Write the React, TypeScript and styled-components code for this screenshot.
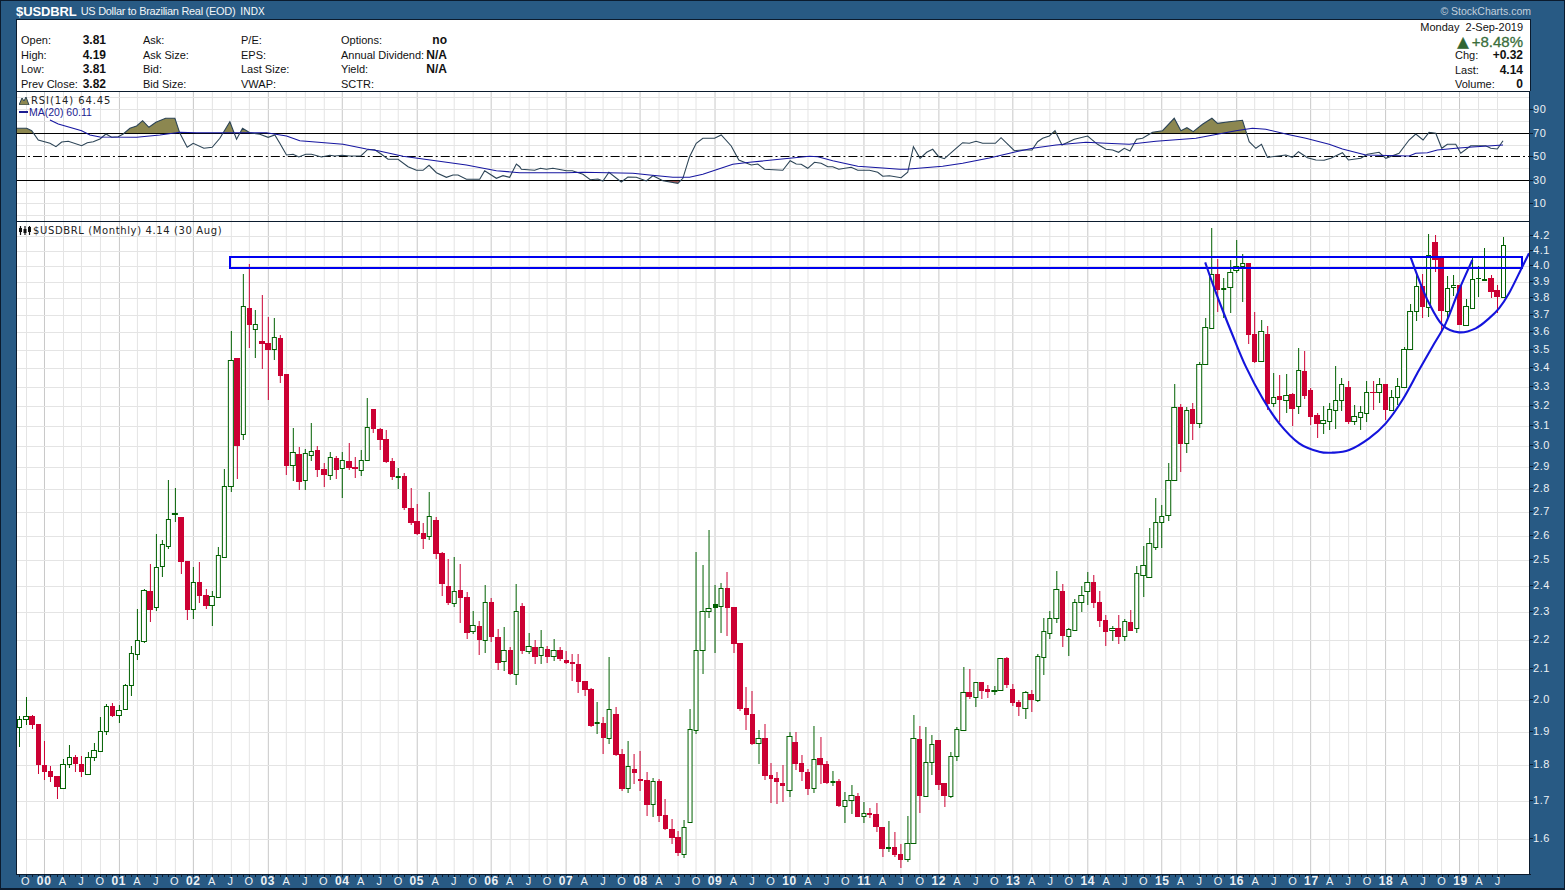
import styled, { createGlobalStyle } from 'styled-components';

// page coordinates of each monthly bar: [wick top, wick bottom, body top, body bottom, up]
type Bar = [number, number, number, number, number];

const bars: Bar[] = [
  [716,747,719,727,1],[697,725,716,719,1],[715,729,716,725,0],[724,774,724,765,0],[741,780,765,772,0],
  [766,782,771,777,0],[776,799,776,787,0],[759,788,764,788,1],[745,768,757,764,1],[755,772,757,764,0],
  [756,777,764,772,0],[752,774,757,774,1],[743,761,750,757,1],[717,751,731,751,1],[704,735,706,731,1],
  [703,717,706,716,0],[705,723,710,715,1],[684,709,685,709,1],[646,696,653,685,1],[609,660,640,654,1],
  [589,643,590,641,1],[564,622,591,610,0],[534,611,567,607,1],[540,577,544,566,1],[480,549,519,546,1],
  [488,522,513,514,1],[517,574,517,562,0],[561,620,561,610,0],[567,619,582,609,1],[562,603,582,596,0],
  [589,609,595,606,0],[591,626,596,605,1],[547,597,555,597,1],[469,557,486,557,1],[331,492,360,486,1],
  [358,479,358,446,0],[274,440,306,434,1],[264,348,308,325,0],[310,358,324,329,1],[295,369,341,344,0],
  [317,400,343,350,0],[318,360,337,349,1],[335,383,338,376,0],[374,475,374,466,0],[428,481,452,465,1],
  [447,490,454,482,0],[449,490,453,480,1],[423,461,451,455,1],[446,477,450,470,0],[463,487,469,475,0],
  [452,480,457,475,1],[456,479,458,470,0],[452,498,460,468,1],[443,470,461,468,0],[457,478,467,469,0],
  [450,476,460,470,1],[398,460,427,460,1],[409,433,409,429,0],[428,450,429,440,0],[430,463,439,462,0],
  [458,480,461,477,0],[468,489,476,477,1],[473,510,476,508,0],[488,525,508,523,0],[504,535,521,534,0],
  [523,549,533,539,0],[492,540,516,536,1],[517,559,520,554,0],[552,596,553,584,0],[559,605,586,603,0],
  [557,607,591,603,1],[564,623,590,598,0],[592,639,597,633,0],[611,634,625,631,1],[621,655,626,640,0],
  [585,653,602,640,1],[598,642,602,637,0],[629,670,637,663,0],[627,671,650,661,1],[647,675,650,674,0],
  [584,685,611,674,1],[603,654,606,651,0],[633,654,646,651,1],[640,664,647,657,0],[630,664,647,655,1],
  [646,663,649,657,0],[639,661,650,656,1],[647,661,650,659,0],[651,664,660,663,0],[654,681,662,664,0],
  [654,693,664,682,0],[681,696,681,690,0],[688,727,689,726,0],[702,734,722,723,1],[717,754,723,738,0],
  [657,744,709,738,1],[707,756,714,755,0],[749,791,754,789,0],[741,793,766,788,1],[754,784,769,773,0],
  [751,791,779,781,0],[772,816,780,805,0],[778,817,781,804,1],[779,822,781,816,0],[799,830,815,829,0],
  [819,844,829,838,0],[831,856,837,853,0],[820,858,827,854,1],[709,822,729,822,1],[552,734,650,730,1],
  [565,674,611,650,1],[530,618,608,611,1],[585,653,604,608,2],[583,633,588,606,1],[572,636,588,608,0],
  [607,653,607,644,0],[643,711,643,709,0],[687,730,708,715,0],[691,745,714,744,0],[730,764,738,743,1],
  [724,780,738,776,0],[763,803,775,779,0],[772,804,778,782,0],[765,802,783,786,0],[732,797,736,790,1],
  [732,770,742,764,0],[755,781,763,772,0],[769,795,772,789,0],[726,793,759,788,1],[737,784,758,765,0],
  [761,784,764,783,0],[771,786,781,782,1],[779,807,781,806,0],[792,823,800,806,1],[785,814,795,800,1],
  [793,817,796,817,0],[802,823,813,816,1],[808,818,813,815,0],[803,832,814,827,0],[827,857,827,849,0],
  [821,852,847,849,2],[832,857,847,855,0],[844,868,854,860,0],[816,862,843,859,1],[715,843,738,843,1],
  [726,813,739,796,0],[727,797,762,796,1],[735,775,744,762,1],[740,790,740,785,0],[783,807,783,796,0],
  [752,798,756,796,1],[727,761,729,756,1],[667,730,692,730,1],[669,699,692,697,0],[682,707,682,697,1],
  [682,699,682,691,0],[685,698,689,692,0],[686,695,690,691,1],[658,690,658,690,1],[657,688,658,685,0],
  [684,706,689,703,0],[700,716,702,707,0],[691,719,692,708,1],[690,712,694,700,0],[654,702,656,700,1],
  [618,675,631,657,1],[611,639,618,633,1],[571,623,589,618,1],[584,647,591,636,0],[628,656,629,636,1],
  [599,630,602,630,1],[586,612,595,602,1],[572,605,582,591,1],[575,608,582,603,0],[591,627,602,621,0],
  [615,646,620,632,0],[626,641,628,630,1],[615,644,628,637,0],[619,641,621,636,1],[610,631,622,631,0],
  [566,633,573,628,1],[546,597,565,575,1],[528,577,543,577,1],[498,550,522,547,1],[505,548,516,522,1],
  [463,521,480,515,1],[384,480,407,480,1],[404,472,407,444,0],[407,453,410,443,1],[403,440,409,424,0],
  [362,428,364,423,1],[318,365,327,364,1],[228,328,274,328,1],[259,312,274,290,0],[278,318,288,289,1],
  [260,313,272,287,1],[240,273,266,270,1],[254,302,263,266,1],[263,344,263,335,0],[312,363,334,362,0],
  [320,361,331,361,1],[326,410,334,404,0],[373,407,397,403,1],[375,422,396,400,0],[374,413,395,400,1],
  [393,426,394,409,0],[348,414,370,406,1],[351,399,371,396,0],[388,425,390,417,0],[413,438,415,424,0],
  [406,434,420,423,1],[403,430,409,421,1],[366,429,400,410,1],[378,411,384,400,1],[381,424,387,422,0],
  [405,425,416,421,1],[406,430,412,417,1],[381,422,392,413,1],[381,410,392,393,0],[378,403,384,392,1],
  [384,420,384,410,0],[390,410,397,410,1],[378,405,386,397,1],[347,387,349,387,1],[304,349,311,349,1],
  [274,321,286,311,1],[274,318,286,307,0],[234,317,255,307,1],[235,272,242,260,0],[258,333,258,311,0],
  [276,321,288,311,1],[275,296,285,287,1],[285,325,285,325,0],[299,326,306,325,1],[257,308,279,308,1],
  [266,297,278,279,2],[248,280,279,280,1],[275,298,278,292,0],[285,313,290,297,0],[237,298,245,297,1],
];

const barX = (i: number) => 19.3 + i * 6.212;
const priceY = (p: number) => 839 - 625 * Math.log(p / 1.6);

const scaled = (x0: number, y0: number, pts: number[]) => {
  const out: [number, number][] = [];
  for (let i = 0; i < pts.length; i += 2) out.push([x0 + pts[i] / 3, y0 + pts[i + 1] / 3]);
  return out;
};

const rsi = [
  ...scaled(0, 0, [50,385,80,385,95,392,115,420,150,430,168,440,185,426,205,424,245,437,262,428,280,425,300,417,318,402,335,412,355,410,370,402,390,385,410,378,428,362,447,382,468,367,497,355,525,355,540,400,562,442,580,430,612,445,637,442,660,415,690,365,710,418,728,385,750,398,780,403,805,412,825,405,840,430,860,465,880,463,897,471,918,463,935,463,965,471,990,466,1005,468,1027,466,1050,468,1083,468,1103,449,1125,449,1145,463,1165,478,1195,478,1225,500,1250,511,1270,511,1288,496,1310,518,1340,532,1360,525,1375,525,1400,538,1440,538,1455,512,1490,535,1510,527,1530,532,1550,492,1560,500]),
  ...scaled(500, 110, [65,178,105,181,122,175,140,178,160,175,200,182,218,182,250,193,272,209,295,207,310,213,328,187,365,216,385,201,410,202,440,213,460,197,490,212,535,220,550,205,570,140,590,100,610,85,645,85,665,75,695,108,718,150,755,165,775,162,795,178,850,181,872,152,890,162,905,163,925,175,945,157,965,160,985,170,1000,170,1018,178,1055,172,1075,181,1110,181,1135,187,1150,199,1170,197]),
  ...scaled(890, 110, [35,203,55,187,72,110,92,145,112,127,130,118,148,140,165,146,200,115,220,98,240,100,260,94,280,100,318,100,335,83,375,122,400,120,428,120,445,95,460,85,480,78,497,62,518,105,555,88,595,78,625,103,650,118,670,120,688,127,705,115,722,123,742,88,760,85,790,67,820,62,855,25,875,62,893,53,912,65,940,43,968,25,985,40,1020,35,1060,31,1080,95,1100,115,1117,103,1135,142,1190,135,1210,142,1228,125,1255,143,1280,150,1305,151,1320,146]),
  ...scaled(1300, 0, [95,475,130,458,148,480,185,475,205,463,240,457,260,475,300,460,330,420,350,402,372,420,390,397,410,400,428,445,445,433,470,433,485,460,515,437,560,437,575,445,595,447,612,422]),
];

const rsiAverage = [
  ...scaled(0, 0, [150,360,175,372,245,392,270,405,300,411,410,412,480,405,540,397,590,398,800,398,860,408,900,422,1030,433,1100,447,1135,452,1210,469,1400,495,1490,512,1560,518]),
  ...scaled(500, 110, [200,188,250,187,400,190,450,195,520,202,570,202,610,193,700,163,750,157,870,145,930,139,955,140,1000,152,1075,169,1150,174,1200,178]),
  ...scaled(890, 110, [50,178,160,169,220,160,300,144,380,125,430,115,500,105,590,97,650,100,720,103,800,94,920,85,1040,62,1090,55,1130,58,1200,74,1250,85,1320,103]),
  ...scaled(1300, 0, [130,447,200,465,330,468,350,460,385,458,415,450,470,445,520,441,612,435]),
];

const bigCup = scaled(1190, 220, [48,127,70,190,100,270,130,345,170,440,220,535,270,610,330,670,390,695,430,698,480,690,540,655,590,610,640,540,690,450,730,380,770,310,810,210,850,120]);
const smallCup = scaled(1190, 220, [665,113,690,180,720,250,760,315,810,337,860,325,900,295,930,265,960,220,1000,140,1020,100]);

const toPoints = (pts: [number, number][]) => pts.map(([x, y]) => `${x.toFixed(1)},${y.toFixed(1)}`).join(' ');

// rsi area closed along a flat edge, so the clip only keeps what crosses the band
const closedArea = (edge: number) =>
  toPoints([[rsi[0][0], edge], ...rsi, [rsi[rsi.length - 1][0], edge]]);

const smooth = (pts: [number, number][]) => {
  let d = `M${pts[0][0]} ${pts[0][1]}`;
  for (let i = 0; i < pts.length - 1; i++) {
    const p0 = pts[Math.max(i - 1, 0)];
    const p1 = pts[i];
    const p2 = pts[i + 1];
    const p3 = pts[Math.min(i + 2, pts.length - 1)];
    d += ` C${p1[0] + (p2[0] - p0[0]) / 6} ${p1[1] + (p2[1] - p0[1]) / 6} ${p2[0] - (p3[0] - p1[0]) / 6} ${p2[1] - (p3[1] - p1[1]) / 6} ${p2[0]} ${p2[1]}`;
  }
  return d;
};

const quarters = bars.map((_, i) => i).filter((i) => i % 3 === 1);
const isJanuary = (i: number) => i % 12 === 4;

const quarterLabel = (i: number) => {
  if (isJanuary(i)) return String((i - 4) / 12).padStart(2, '0');
  return ['A', 'J', 'O'][(((i - 4) % 12) / 3) - 1] ?? 'O';
};

const priceTicks = [4.2,4.1,4.0,3.9,3.8,3.7,3.6,3.5,3.4,3.3,3.2,3.1,3.0,2.9,2.8,2.7,2.6,2.5,2.4,2.3,2.2,2.1,2.0,1.9,1.8,1.7,1.6];
const rsiGrid = [97,109,121,145,168,192,203,215];
const rsiTicks: [string, number][] = [['90',109],['70',133],['50',156],['30',180],['10',203]];

const quote = [
  [['Open:', '3.81'], ['High:', '4.19'], ['Low:', '3.81'], ['Prev Close:', '3.82']],
  [['Ask:', ''], ['Ask Size:', ''], ['Bid:', ''], ['Bid Size:', '']],
  [['P/E:', ''], ['EPS:', ''], ['Last Size:', ''], ['VWAP:', '']],
  [['Options:', 'no'], ['Annual Dividend:', 'N/A'], ['Yield:', 'N/A'], ['SCTR:', '']],
];
const quoteWidths = [122, 98, 100, 107];
const quoteInner = [85, 90, 90, 106];

const GlobalStyle = createGlobalStyle`
  html, body { margin: 0; padding: 0; background: #285a84; }
  * { box-sizing: border-box; }
`;

const Page = styled.div`
  width: 1565px;
  height: 890px;
  background: #285a84;
  border: 1px solid #0b1b2e;
  border-bottom-width: 2px;
  padding-left: 15px;
  display: flex;
  flex-direction: column;
  overflow: hidden;
  font-family: "Liberation Sans", Arial, sans-serif;
`;

const TitleBar = styled.div`
  flex: none;
  height: 18px;
  width: 1515px;
  padding-top: 2px;
  display: flex;
  align-items: center;
  color: #ffffff;
  white-space: nowrap;
`;

const Symbol = styled.span`
  font-size: 13px;
  font-weight: 700;
  letter-spacing: -0.1px;
  margin-right: 4px;
`;

const Name = styled.span`
  font-size: 11px;
  letter-spacing: -0.3px;
  color: #f2f5f8;
  margin-right: 5px;
`;

const Exchange = styled.span`
  font-size: 10px;
  letter-spacing: 0.2px;
`;

const Copyright = styled.span`
  margin-left: auto;
  font-size: 10.5px;
  color: #c3d0dc;
`;

const Header = styled.div`
  flex: none;
  width: 1515px;
  height: 72px;
  background: #ffffff;
  border: 1px solid #0b1b2e;
  border-bottom: none;
  padding: 0 7px 0 4px;
  display: flex;
  justify-content: space-between;
  color: #111111;
  font-size: 11px;
`;

const QuoteGrid = styled.div`
  display: flex;
  padding-top: 13px;
`;

const QuoteColumn = styled.div<{ $width: number; $inner: number }>`
  width: ${(p) => p.$width}px;
  padding-right: ${(p) => p.$width - p.$inner}px;
`;

const QuoteRow = styled.div`
  height: 14.5px;
  line-height: 14.5px;
  display: flex;
  justify-content: space-between;
  white-space: nowrap;
`;

const Strong = styled.span`
  font-weight: 700;
  font-size: 12px;
`;

const Summary = styled.div`
  width: 68px;
  padding-top: 1px;
  display: flex;
  flex-direction: column;
`;

const DateLine = styled.div`
  height: 13px;
  line-height: 13px;
  display: flex;
  justify-content: flex-end;
  white-space: pre;
`;

const Change = styled.div`
  height: 14px;
  line-height: 14px;
  margin-top: 1px;
  margin-bottom: -1px;
  display: flex;
  justify-content: flex-end;
  align-items: center;
  white-space: nowrap;
  font-size: 15px;
  color: #3a6e3c;
  -webkit-text-stroke: 0.3px #3a6e3c;
`;

const Arrow = styled.span`
  font-family: "DejaVu Sans", sans-serif;
  font-size: 15px;
  color: #2f6532;
  margin-right: 3px;
`;

const ChartRow = styled.div<{ $height: number }>`
  flex: none;
  display: flex;
  height: ${(p) => p.$height}px;
`;

const Panel = styled.div`
  position: relative;
  width: 1515px;
  height: 100%;
  background: #ffffff;
  border: 1px solid #0b1b2e;
  border-bottom: none;
`;

const PlotSvg = styled.svg`
  display: block;
  width: 100%;
  height: 100%;
`;

const AxisSvg = styled.svg`
  display: block;
  flex: none;
  overflow: hidden;
`;

const AxisLabel = styled.text<{ $bold?: boolean }>`
  font-family: "Liberation Sans", Arial, sans-serif;
  font-size: ${(p) => (p.$bold ? 12 : 11)}px;
  font-weight: ${(p) => (p.$bold ? 700 : 400)};
  letter-spacing: 0.6px;
  fill: #edf1f5;
`;

const PriceLegend = styled.div`
  position: absolute;
  top: 1px;
  left: 2px;
  height: 14px;
  display: flex;
  align-items: center;
  gap: 2px;
  font-family: "DejaVu Sans", sans-serif;
  font-size: 10px;
  letter-spacing: 0.62px;
  color: #222222;
  white-space: nowrap;
`;

const RsiLegend = styled.div`
  position: absolute;
  top: 0;
  left: 2px;
  padding-top: 2px;
  display: flex;
  flex-direction: column;
  white-space: nowrap;
`;

const RsiRow = styled.div`
  display: flex;
  align-items: center;
  gap: 1px;
  height: 12px;
  font-family: "DejaVu Sans", sans-serif;
  font-size: 10px;
  letter-spacing: 0.9px;
  color: #222222;
`;

const MaRow = styled.div`
  display: flex;
  align-items: center;
  height: 12px;
  font-family: "Liberation Sans", Arial, sans-serif;
  font-size: 10.5px;
  color: #1c1c92;
`;

const MaSwatch = styled.span`
  display: inline-block;
  width: 9px;
  height: 2px;
  margin-right: 1px;
  background: #1c1c92;
`;

const Candles = () => (
  <g shapeRendering="crispEdges">
    {bars.map(([top, bottom, bodyTop, bodyBottom, kind], i) => {
      const x = barX(i);
      const wick = Math.round(x) + 0.5;
      const left = Math.round(x - 2.4);
      const right = Math.round(x + 3);
      const color = kind ? '#006000' : '#cc0033';
      const height = Math.max(bodyBottom - bodyTop, 1);
      return (
        <g key={i}>
          <line x1={wick} x2={wick} y1={top} y2={bottom} stroke={color} />
          {kind === 1 ? (
            <rect x={left + 0.5} y={bodyTop + 0.5} width={right - left - 1} height={height} fill="#ffffff" stroke={color} />
          ) : (
            <rect x={left} y={bodyTop} width={right - left} height={height} fill={color} />
          )}
        </g>
      );
    })}
  </g>
);

const VerticalGrid = ({ top, bottom }: { top: number; bottom: number }) => (
  <g shapeRendering="crispEdges">
    {quarters.map((i) => {
      const x = Math.round(barX(i)) + 0.5;
      return <line key={i} x1={x} x2={x} y1={top} y2={bottom} stroke={isJanuary(i) ? '#c8c8c8' : '#e4e4e4'} />;
    })}
  </g>
);

const HorizontalGrid = ({ levels }: { levels: number[] }) => (
  <g shapeRendering="crispEdges">
    {levels.map((y) => (
      <line key={y} x1={16} x2={1531} y1={Math.round(y) + 0.5} y2={Math.round(y) + 0.5} stroke="#e4e4e4" />
    ))}
  </g>
);

const RsiChart = () => (
  <PlotSvg viewBox="17 92 1513 129" preserveAspectRatio="none">
    <defs>
      <clipPath id="overbought"><rect x="16" y="91" width="1515" height="42" /></clipPath>
      <clipPath id="oversold"><rect x="16" y="180" width="1515" height="41" /></clipPath>
    </defs>
    <VerticalGrid top={91} bottom={221} />
    <HorizontalGrid levels={rsiGrid} />
    <polygon points={closedArea(170)} fill="#8c8750" clipPath="url(#overbought)" />
    <polygon points={closedArea(150)} fill="#a05a5a" clipPath="url(#oversold)" />
    <g shapeRendering="crispEdges" stroke="#000000">
      <line x1="16" x2="1531" y1="133.5" y2="133.5" />
      <line x1="16" x2="1531" y1="156.5" y2="156.5" strokeDasharray="9 3 2 3" />
      <line x1="16" x2="1531" y1="180.5" y2="180.5" />
    </g>
    <polyline points={toPoints(rsi)} fill="none" stroke="#2c4456" strokeWidth="1.1" />
    <polyline points={toPoints(rsiAverage)} fill="none" stroke="#1616a0" strokeWidth="1.1" />
  </PlotSvg>
);

const PriceChart = () => (
  <PlotSvg viewBox="17 222 1513 652" preserveAspectRatio="none">
    <VerticalGrid top={221} bottom={874} />
    <HorizontalGrid levels={priceTicks.map(priceY)} />
    <Candles />
    <rect x="230" y="257" width="1292.5" height="11" fill="none" stroke="#0000f0" strokeWidth="2" shapeRendering="crispEdges" />
    <path d={smooth(bigCup)} fill="none" stroke="#1414dc" strokeWidth="2.1" />
    <path d={smooth(smallCup)} fill="none" stroke="#1414dc" strokeWidth="2.1" />
  </PlotSvg>
);

const RightAxis = ({ height, top, ticks }: { height: number; top: number; ticks: [string, number][] }) => (
  <AxisSvg width="34" height={height} viewBox={`1531 ${top} 34 ${height}`}>
    {ticks.map(([label, y]) => (
      <g key={label}>
        <line x1="1531" x2="1534" y1={y + 0.5} y2={y + 0.5} stroke="#0b1b2e" shapeRendering="crispEdges" />
        <AxisLabel x="1534" y={y + 4}>{label}</AxisLabel>
      </g>
    ))}
  </AxisSvg>
);

const BottomAxis = () => (
  <AxisSvg width="1515" height="14" viewBox="16 874 1515 14">
    <line x1="16" x2="1531" y1="874.5" y2="874.5" stroke="#0b1b2e" shapeRendering="crispEdges" />
    {bars.map((_, i) => (
      <line key={i} x1={Math.round(barX(i)) + 0.5} x2={Math.round(barX(i)) + 0.5} y1="875" y2="877" stroke="#0b1b2e" shapeRendering="crispEdges" />
    ))}
    {quarters.map((i) => (
      <AxisLabel key={i} x={barX(i)} y="885" textAnchor="middle" $bold={isJanuary(i)}>{quarterLabel(i)}</AxisLabel>
    ))}
  </AxisSvg>
);

function App() {
  return (
    <>
      <GlobalStyle />
      <Page>
        <TitleBar>
          <Symbol>$USDBRL</Symbol>
          <Name>US Dollar to Brazilian Real (EOD)</Name>
          <Exchange>INDX</Exchange>
          <Copyright>© StockCharts.com</Copyright>
        </TitleBar>
        <Header>
          <QuoteGrid>
            {quote.map((column, c) => (
              <QuoteColumn key={c} $width={quoteWidths[c]} $inner={quoteInner[c]}>
                {column.map(([label, value]) => (
                  <QuoteRow key={label}>
                    <span>{label}</span>
                    <Strong>{value}</Strong>
                  </QuoteRow>
                ))}
              </QuoteColumn>
            ))}
          </QuoteGrid>
          <Summary>
            <DateLine>Monday  2-Sep-2019</DateLine>
            <Change><Arrow>▲</Arrow>+8.48%</Change>
            <QuoteRow><span>Chg:</span><Strong>+0.32</Strong></QuoteRow>
            <QuoteRow><span>Last:</span><Strong>4.14</Strong></QuoteRow>
            <QuoteRow><span>Volume:</span><Strong>0</Strong></QuoteRow>
          </Summary>
        </Header>
        <ChartRow $height={130}>
          <Panel>
            <RsiChart />
            <RsiLegend>
              <RsiRow>
                <svg width="11" height="9" viewBox="0 0 11 9"><path d="M0 9 L3 2 L5 5 L7 1 L10 9 Z" fill="#8c8750" stroke="#2c4456" /></svg>
                RSI(14) 64.45
              </RsiRow>
              <MaRow><MaSwatch />MA(20) 60.11</MaRow>
            </RsiLegend>
          </Panel>
          <RightAxis height={130} top={91} ticks={rsiTicks} />
        </ChartRow>
        <ChartRow $height={653}>
          <Panel>
            <PriceChart />
            <PriceLegend>
              <svg width="12" height="9" viewBox="0 0 12 9"><path d="M1.5 0V9M6 0V9M10.5 0V9" stroke="#111" strokeWidth="1.2" /><path d="M0 2H3V6H0ZM4.5 3H7.5V7H4.5ZM9 1H12V6H9Z" fill="#111" /></svg>
              $USDBRL (Monthly) 4.14 (30 Aug)
            </PriceLegend>
          </Panel>
          <RightAxis height={653} top={221} ticks={priceTicks.map((p) => [p.toFixed(1), Math.round(priceY(p)) - 1] as [string, number])} />
        </ChartRow>
        <BottomAxis />
      </Page>
    </>
  );
}

export default App;
